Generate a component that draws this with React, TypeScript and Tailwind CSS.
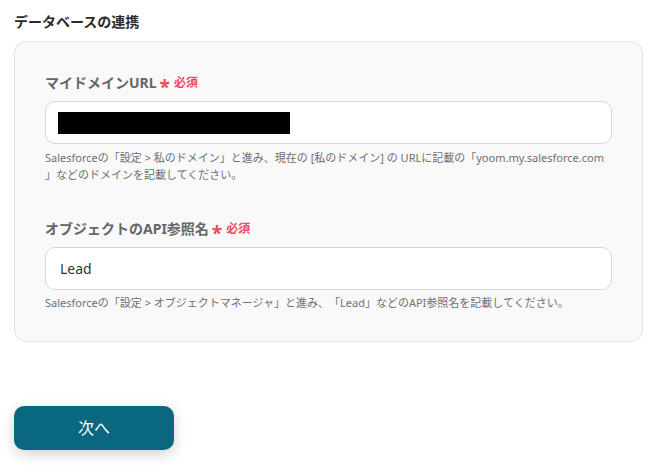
import React from "react";

const font = { fontFamily: '"Noto Sans", "Noto Sans CJK JP", sans-serif' };

function Label({ text }: { text: string }) {
  return (
    <div className="flex items-center h-[20px]">
      <span className="text-[14px] font-bold text-[#666666] leading-[20px]">{text}</span>
      <span className="ml-[3px] text-[19px] font-bold text-[#f2495c] leading-[20px] translate-y-[4px]">*</span>
      <span className="ml-[4px] text-[12px] font-bold text-[#f2495c] leading-[20px]">必須</span>
    </div>
  );
}

export default function App() {
  return (
    <div className="bg-white w-[659px] h-[465px] px-[14px] pt-[12px] [text-spacing-trim:space-all]" style={font}>
      <div className="text-[14px] font-bold leading-[20px] text-[#2b2b2b]">データベースの連携</div>
      <div className="mt-[9px] w-[629px] rounded-[12px] border border-[#e3e3e6] bg-[#f9f9f9] pl-[30px] pr-[30px] pt-[31px] pb-[30px]">
        <Label text="マイドメインURL" />
        <div className="mt-[8px] h-[43px] rounded-[10px] border border-[#d3d6dc] bg-white pl-[12px] flex items-center">
          <div className="w-[232px] h-[22px] bg-black" />
        </div>
        <div className="mt-[5px] text-[11px] leading-[17px] text-[#6f6f6f]">
          <div className="whitespace-nowrap">Salesforceの「設定 &gt; 私のドメイン」と進み、現在の [私のドメイン] の URLに記載の「yoom.my.salesforce.com</div>
          <div className="whitespace-nowrap">」などのドメインを記載してください。</div>
        </div>
        <div className="mt-[36px]">
          <Label text="オブジェクトのAPI参照名" />
        </div>
        <div className="mt-[8px] h-[43px] rounded-[10px] border border-[#d3d6dc] bg-white pl-[14px] flex items-center text-[14px] text-[#333333]">
          Lead
        </div>
        <div className="mt-[4px] text-[11px] leading-[17px] text-[#6f6f6f] whitespace-nowrap">
          Salesforceの「設定 &gt; オブジェクトマネージャ」と進み、「Lead」などのAPI参照名を記載してください。
        </div>
      </div>
      <button className="mt-[64px] w-[160px] h-[44px] rounded-[10px] bg-[#0a6780] text-white text-[16px] shadow-[0_4px_14px_rgba(0,0,0,0.18)] flex items-center justify-center">
        次へ
      </button>
    </div>
  );
}
